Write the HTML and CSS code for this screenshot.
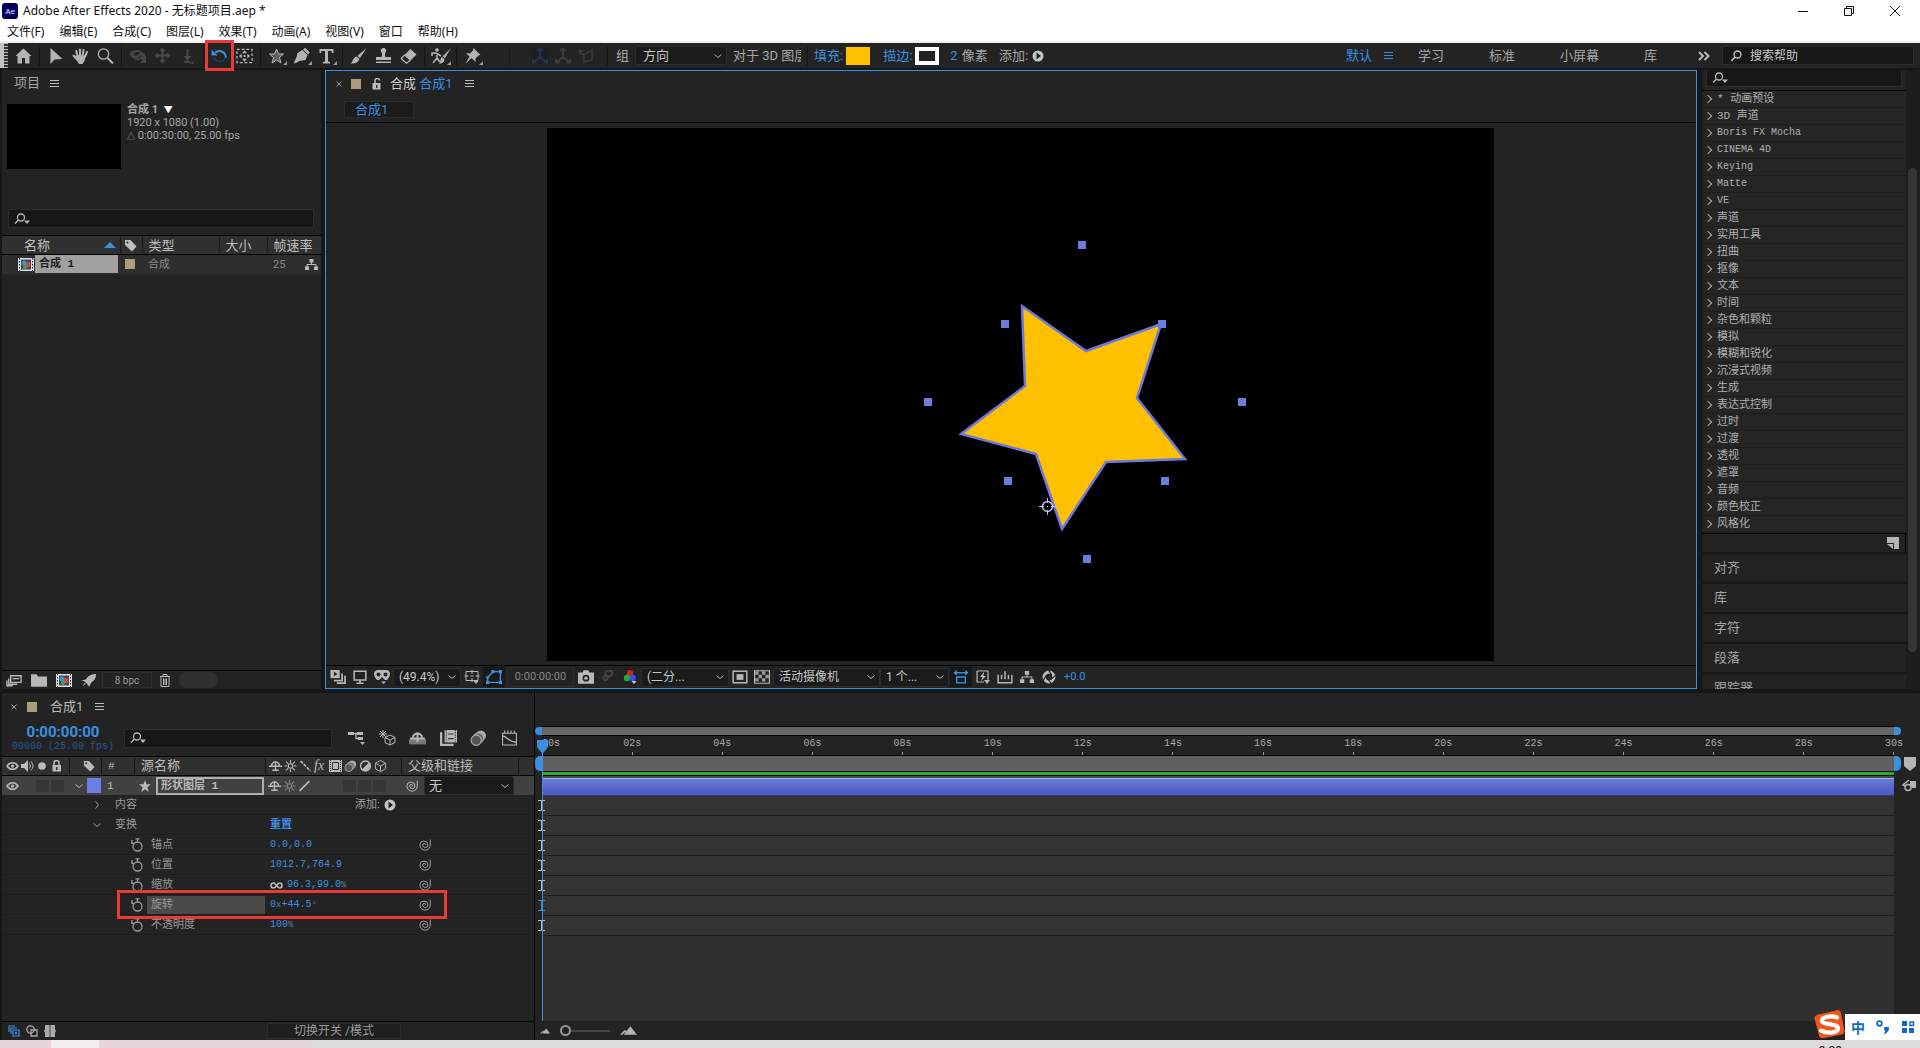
FILE: index.html
```html
<!DOCTYPE html>
<html lang="zh-CN">
<head>
<meta charset="utf-8">
<title>Adobe After Effects 2020 - 无标题项目.aep *</title>
<link rel="stylesheet" href="styles.css">
</head>
<body>
<svg class="defs" aria-hidden="true">
  <symbol id="home" viewBox="0 0 16 16"><path fill="currentColor" d="M8 0.5 0 8h2v7.500h4.500V10h3v5.500H14V8h2z"/></symbol>
  <symbol id="arrow" viewBox="0 0 16 16"><path fill="currentColor" d="M3 0v16l4-4.500L15 11z"/></symbol>
  <symbol id="hand" viewBox="0 0 16 16"><path fill="none" stroke="currentColor" stroke-width="2" stroke-linecap="round" d="M5 8 3.800 3M7.500 8V1.500M10 8l1-6M12.300 9 14.500 4M4 11 1 7.500"/><path fill="currentColor" d="M4 7l9 .5-.8 5L10 16H6.500L2 9z"/></symbol>
  <symbol id="zoom" viewBox="0 0 16 16"><circle cx="6" cy="6" r="5.200" fill="none" stroke="currentColor" stroke-width="1.300"/><path stroke="currentColor" stroke-width="2" d="m10 10 5.500 5.500"/></symbol>
  <symbol id="orbit" viewBox="0 0 20 16"><circle cx="10" cy="7" r="5" fill="none" stroke="currentColor" stroke-width="2"/><path fill="none" stroke="currentColor" stroke-width="2.500" d="M8 3H4L2 6l3 3h5l3-3h4l1 3-3 3M16 15h3v-3z"/></symbol>
  <symbol id="pan" viewBox="0 0 16 16"><path fill="none" stroke="currentColor" stroke-width="2" d="M8 1v13M1.500 7.500h13M6 3l2-2 2 2M6 12l2 2 2-2M3.500 5.500l-2 2 2 2M12.500 5.500l2 2-2 2"/></symbol>
  <symbol id="dolly" viewBox="0 0 16 16"><path fill="none" stroke="currentColor" stroke-width="2" d="M8 1v10M5 14h6"/><path fill="currentColor" d="M4 8h8l-4 5zM14 13v3h-3z"/></symbol>
  <symbol id="rotate" viewBox="0 0 18 18"><path fill="none" stroke="currentColor" stroke-width="2.200" d="M4 5.500C8 2 14 3 16 9v2"/><path fill="currentColor" d="m0 2 7 6.500H0z"/><path fill="none" stroke="#1d4a78" stroke-width="2" stroke-dasharray="2 1.500" d="M3 11c1 3 3 4 6 4s5-1 6-3"/></symbol>
  <symbol id="anchorbox" viewBox="0 0 18 16"><path fill="none" stroke="currentColor" stroke-width="1.300" stroke-dasharray="3 2" d="M1 1h16v14H1z"/><path fill="currentColor" d="m9 2 2.500 3h-5zM9 14l2.500-3h-5zM3 8l3-2.500v5zM15 8l-3-2.500v5zM8 7h2v2H8z"/></symbol>
  <symbol id="star" viewBox="0 0 16 16"><path fill="#5e5e5e" stroke="currentColor" d="m8 1 2 5h5l-4 3.500 1.500 5.500L8 12l-4.500 3L5 9.500 1 6h5z"/></symbol>
  <symbol id="starsolid" viewBox="0 0 16 16"><path fill="currentColor" d="m8 0 2 5.500h6L11.200 9.500 13 16l-5-3.800L3 16l1.800-6.500L0 5.500h6z"/></symbol>
  <symbol id="pen" viewBox="0 0 16 16"><path fill="currentColor" d="m9 2 5 5-2 5-6 1-5.500 3 5-6a1.500 1.500 0 1 1 1 .8L0 15.500 3 9l1-4z"/><path stroke="currentColor" stroke-width="2.500" d="m10.500.500 5 5"/></symbol>
  <symbol id="type" viewBox="0 0 16 16"><path fill="currentColor" d="M1 1h14v4h-1.500L13 3H9.500v10.500l2 .500v1.500h-7V14l2-.5V3H3l-.5 2H1z"/></symbol>
  <symbol id="brush" viewBox="0 0 16 16"><path fill="currentColor" d="M16 0 9.500 10l-2.700-2zM6 8.500l2.800 2.300C8 15 4 16 0 15.500c2.500-1 2-6 6-7z"/></symbol>
  <symbol id="stamp" viewBox="0 0 16 16"><path fill="currentColor" d="M8 0c2.500 0 3.500 2.500 2 4.500-.7 1-.7 3 0 4.500h5.500v3H.5V9H6c.7-1.500.7-3.500 0-4.500C4.500 2.500 5.500 0 8 0zM.5 13.500h15V15H.5z"/></symbol>
  <symbol id="eraser" viewBox="0 0 16 16"><path fill="currentColor" d="m10 1 6 5.500-6 6L4 7z"/><path fill="none" stroke="currentColor" stroke-width="1.200" d="m4 7-3.300 3.500L6 15.300l4-3.300z"/></symbol>
  <symbol id="roto" viewBox="0 0 20 16"><circle cx="6" cy="2" r="1.800" fill="currentColor"/><path fill="none" stroke="currentColor" stroke-width="1.500" d="M1 8V5h4l5 3M6 5v5l-4 5M6 10l3 4"/><path fill="currentColor" d="m20 0-6 10-2.500-1.500zM11 9l2.500 2C13 15 10 16 8 15.500c2-1.500 1-5.500 3-6.500z"/></symbol>
  <symbol id="pin" viewBox="0 0 16 16"><path fill="currentColor" d="m9 0 7 7-2 .5-3 3 .2 3.500L7 10l-6 6 4-7.500L1.500 5l4 .5 3-3z"/></symbol>
  <symbol id="axes" viewBox="0 0 18 16"><path fill="none" stroke="currentColor" stroke-width="2" d="M9 1v8l-6 5M9 9l6 5M6 3l3-2.500L12 3M2 11v3.500h3.500M16 11v3.500h-3.500"/></symbol>
  <symbol id="view3d" viewBox="0 0 18 16"><path fill="none" stroke="currentColor" stroke-width="1.500" d="m3 5 4 2 8-5v10l-8 2V7M3 1v5M1 3h5"/></symbol>
  <symbol id="menu" viewBox="0 0 9 9"><path stroke="currentColor" d="M0 1.500h9M0 4.500h9M0 7.500h9"/></symbol>
  <symbol id="x" viewBox="0 0 6 6"><path stroke="currentColor" d="m.5.5 5 5m0-5-5 5"/></symbol>
  <symbol id="down" viewBox="0 0 8 8"><path fill="none" stroke="currentColor" d="m.5 2.500 3.500 3 3.500-3"/></symbol>
  <symbol id="right" viewBox="0 0 8 8"><path fill="none" stroke="currentColor" d="m2.500.5 3 3.500-3 3.500"/></symbol>
  <symbol id="chevrons" viewBox="0 0 12 10"><path fill="none" stroke="currentColor" stroke-width="2" d="m1 1 4 4-4 4M6.500 1l4 4-4 4"/></symbol>
  <symbol id="search" viewBox="0 0 17 12"><circle cx="7" cy="4.500" r="3.500" fill="none" stroke="currentColor" stroke-width="1.300"/><path stroke="currentColor" stroke-width="1.500" d="M4.500 7 1 10.500"/><path fill="currentColor" d="M10 7.500h6L13 11z"/></symbol>
  <symbol id="find" viewBox="0 0 14 12"><circle cx="8" cy="4.500" r="3.500" fill="none" stroke="currentColor" stroke-width="1.300"/><path stroke="currentColor" stroke-width="1.500" d="M5.500 7 2 11"/></symbol>
  <symbol id="play" viewBox="0 0 12 12"><circle cx="6" cy="6" r="5.500" fill="#c4c4c4"/><path fill="#232323" d="m4.500 2.500 4.500 3.500-4.500 3.500z"/></symbol>
  <symbol id="lock" viewBox="0 0 12 12"><path fill="currentColor" d="M2 5h8.500v6.500H2z"/><path fill="none" stroke="currentColor" stroke-width="1.500" d="M3.500 5V3a2.500 2.500 0 0 1 5 0v2"/><path fill="#333" d="M5.500 7h1.500v3H5.500z"/></symbol>
  <symbol id="unlock" viewBox="0 0 12 12"><path fill="currentColor" d="M1.500 5h8v6.500h-8z"/><path fill="none" stroke="currentColor" stroke-width="1.500" d="M4 5V3a2.200 2.200 0 0 1 4.500-.5"/><path fill="#333" d="M5 7h1.500v3H5z"/></symbol>
  <symbol id="tag" viewBox="0 0 13 13"><path fill="currentColor" d="M1 1h5.500l6 6.500-4.500 5L1 6z"/><circle cx="3.500" cy="3.500" r="1" fill="#222"/></symbol>
  <symbol id="tree" viewBox="0 0 13 13"><path fill="currentColor" d="M4.500 1h4v3.500h-4zM0 8.500h4V12H0zM9 8.500h4V12H9z"/><path fill="none" stroke="currentColor" d="M6.500 4v3M2 9V6.500h9V9"/></symbol>
  <symbol id="comp" viewBox="0 0 16 13"><path fill="#ddd" d="M0 0h16v13H0z"/><path stroke="#222" stroke-dasharray="1.500 1.500" d="M1.500 0v13M14.500 0v13"/><path fill="#446" d="M3 1.500h10v10H3z"/><circle cx="6" cy="5" r="2.500" fill="#2e9cc4"/><path fill="#d24a3c" d="M8 4h4v5H8z"/><circle cx="7" cy="9" r="2" fill="#5a9a50"/></symbol>
  <symbol id="interpret" viewBox="0 0 17 12"><path fill="none" stroke="currentColor" stroke-width="1.500" d="M5 1h11v7H5zM7 4h7M3 4v6h9M1 6v5.500h6"/></symbol>
  <symbol id="folder" viewBox="0 0 14 11"><path fill="currentColor" d="M0 0h5l1 2h8v9H0z"/></symbol>
  <symbol id="rocket" viewBox="0 0 14 12"><path fill="currentColor" d="M13.500 0C9 0 6 2 4 5L0 6l3 1 3 3 1 2 2-4c3-2 4.500-4 4.500-8zM1 11l2-3 1 1z"/></symbol>
  <symbol id="trash" viewBox="0 0 11 13"><path fill="none" stroke="currentColor" d="M.5 2.500h10M3.500 2V.5h4V2M1.500 2.500v10h8v-10M4 4.500V11M5.500 4.500V11M7 4.500V11"/></symbol>
  <symbol id="stack" viewBox="0 0 13 12"><path fill="currentColor" d="M0 0h8v7H0z"/><path fill="#232323" d="m3 1.500 3 2-3 2z"/><path fill="none" stroke="currentColor" stroke-width="1.500" d="M3 9h7V3M5.500 11.300h7V5"/></symbol>
  <symbol id="monitor" viewBox="0 0 12 12"><path fill="none" stroke="currentColor" stroke-width="1.300" d="M1 1h10v7.500H1zM6 8.500V11M3 11.300h6"/></symbol>
  <symbol id="goggles" viewBox="0 0 16 14"><path fill="currentColor" d="M3 0h10q3 1 3 4t-3 6h-2L8 7 5 10H3Q0 7 0 4t3-4zM7 11.500h5L9.500 14z"/><circle cx="4.500" cy="4.500" r="2" fill="#232323"/><circle cx="11.500" cy="4.500" r="2" fill="#232323"/></symbol>
  <symbol id="guides" viewBox="0 0 15 14"><path fill="none" stroke="currentColor" d="M1.500 1.500h12v9h-12zM7.500 0v4M7.500 8v4M0 6h4M11 6h4M6 6h3"/><path fill="currentColor" d="M9 11h5l-2.500 3z"/></symbol>
  <symbol id="mask" viewBox="0 0 15 13"><path fill="none" stroke="currentColor" stroke-width="1.300" d="M1.500 11.500V7l5-5.500h7v10z"/><path fill="currentColor" d="M0 10h3v3H0zM12 10h3v3h-3zM12 0h3v3h-3zM5 0h3v3H5zM0 6h3v2H0z"/></symbol>
  <symbol id="camera" viewBox="0 0 14 12"><path fill="currentColor" d="M0 2h4l1-2h4l1 2h4v10H0z"/><circle cx="7" cy="7" r="3" fill="#232323"/><circle cx="7" cy="7" r="1.500" fill="currentColor"/></symbol>
  <symbol id="persons" viewBox="0 0 14 14"><path fill="none" stroke="currentColor" stroke-width="2" d="M4 6a2 2 0 1 1 1 4 2 2 0 1 1-1-4M9 1a2 2 0 1 1 1 4 3 3 0 1 1-1-4"/></symbol>
  <symbol id="rgb" viewBox="0 0 13 14"><circle cx="6.500" cy="3.500" r="3.200" fill="#e02020"/><circle cx="3.500" cy="8" r="3.200" fill="#20b030"/><circle cx="9" cy="8" r="3.200" fill="#3050f0"/><path fill="#ccc" d="M8 11h5l-2.500 3z"/></symbol>
  <symbol id="roi" viewBox="0 0 14 12"><path fill="none" stroke="currentColor" stroke-width="1.300" d="M1 1h12v10H1z"/><path fill="currentColor" d="M4 3.500h6v5H4z"/></symbol>
  <symbol id="checker" viewBox="0 0 14 12"><path fill="none" stroke="currentColor" d="M.5.500h13v11H.5z"/><path fill="#999" d="M1 1h3v3H1zM7 1h3v3H7zM4 4h3v3H4zM10 4h3v3h-3zM1 7h3v3H1zM7 7h3v3H7z"/></symbol>
  <symbol id="pixel" viewBox="0 0 14 13"><path fill="none" stroke="currentColor" stroke-width="1.300" d="M1 2.500h12M3 6.500h8v5.500H3zM3 .500l-2 2 2 2M11 .500l2 2-2 2"/></symbol>
  <symbol id="fast" viewBox="0 0 14 14"><path fill="none" stroke="currentColor" stroke-width="1.200" d="M1 1h11v9M1 1v11h7"/><path fill="currentColor" d="M8 2 4 7h2.500L5 11l5-5H7.500zM8 10h6l-3 4z"/></symbol>
  <symbol id="graphline" viewBox="0 0 14 12"><path fill="none" stroke="currentColor" stroke-width="1.300" d="M1 4v7h12V4M4 8V4M7 8V1M10 8V4"/></symbol>
  <symbol id="aperture" viewBox="0 0 13 13"><circle cx="6.500" cy="6.500" r="4.500" fill="none" stroke="currentColor" stroke-width="3"/><path stroke="#232323" d="m6 0 3 5M12.500 5 8 9M9 13 5 8M1 10l3-5"/></symbol>
  <symbol id="eye" viewBox="0 0 12 8"><path fill="none" stroke="currentColor" stroke-width="1.500" d="M1 4c2.500-4 7.500-4 10 0-2.500 4-7.500 4-10 0z"/><circle cx="6" cy="4" r="1.500" fill="currentColor"/></symbol>
  <symbol id="speaker" viewBox="0 0 13 12"><path fill="currentColor" d="M0 4h3l4-4v12L3 8H0z"/><path fill="none" stroke="currentColor" d="M8.500 3.500q2 2.500 0 5M10 1.500q4 4.500 0 9"/></symbol>
  <symbol id="dot" viewBox="0 0 8 8"><circle cx="4" cy="4" r="3.800" fill="currentColor"/></symbol>
  <symbol id="shy" viewBox="0 0 14 12"><path fill="none" stroke="currentColor" stroke-width="1.600" d="M3 5.500V4q4-5 8 0v1.500M0 6.300h14M7 2v9M3.500 10.500h7"/></symbol>
  <symbol id="sun" viewBox="0 0 11 11"><circle cx="5.500" cy="5.500" r="2" fill="none" stroke="currentColor"/><path stroke="currentColor" d="M5.500 0v2.500M5.500 8.500V11M0 5.500h2.500M8.500 5.500H11M1.500 1.500l2 2M9.500 1.500l-2 2M1.500 9.500l2-2M9.500 9.500l-2-2"/></symbol>
  <symbol id="quality" viewBox="0 0 11 11"><path stroke="currentColor" stroke-width="1.500" stroke-dasharray="3 1" d="m1 1 9 9"/></symbol>
  <symbol id="slash" viewBox="0 0 11 11"><path stroke="currentColor" stroke-width="1.500" d="m1 10 9-9"/></symbol>
  <symbol id="film" viewBox="0 0 13 12"><path fill="currentColor" d="M0 0h13v12H0z"/><path fill="none" stroke="#333" stroke-dasharray="1 1" d="M1.500 0v12M11.500 0v12"/><path fill="none" stroke="#333" d="M3.500 2.500h6v7h-6z"/></symbol>
  <symbol id="blur" viewBox="0 0 14 14"><circle cx="9" cy="5" r="4.500" fill="#aaa"/><circle cx="7" cy="7" r="4.500" fill="#666" stroke="#aaa"/><circle cx="5" cy="9" r="4.500" fill="#555" stroke="#aaa"/></symbol>
  <symbol id="adjust" viewBox="0 0 12 12"><circle cx="6" cy="6" r="5" fill="none" stroke="currentColor" stroke-width="1.300"/><path fill="currentColor" d="M9.500 2.500a5 5 0 0 1-7 7z"/></symbol>
  <symbol id="cube" viewBox="0 0 12 13"><path fill="none" stroke="currentColor" d="m6 .500 5.500 3v6L6 12.500l-5.500-3v-6zM.5 3.500l5.500 3 5.500-3M6 6.500v6"/></symbol>
  <symbol id="flow" viewBox="0 0 17 14"><path fill="currentColor" d="M0 1h6v3H0zM9 1h6v3H9zM10 6h5v3h-5zM12 11h5l-2.500 3z"/><path fill="none" stroke="currentColor" stroke-width="1.300" d="M6 2.500h4M8 2.500v5h3"/></symbol>
  <symbol id="draft" viewBox="0 0 17 16"><path fill="none" stroke="currentColor" d="m11 5 5 2.500v5L11 15l-5-2.500v-5zM6 7.500l5 2.500 5-2.500M11 10v5M4 0v8M0 4h8M1 1l6 6M7 1 1 7"/></symbol>
  <symbol id="shylay" viewBox="0 0 16 12"><path fill="#777" d="M0 7h16v5H0z"/><path fill="none" stroke="currentColor" stroke-width="1.800" d="M4 6V4q4-5 8 0v2M1 6.500h14M8 2v8"/></symbol>
  <symbol id="frames" viewBox="0 0 15 14"><path fill="currentColor" d="M4 0h11v11H4zM2 2v10h10v2H0V2z"/><path fill="none" stroke="#333" stroke-dasharray="1 1" d="M5.500 0v11M13.500 0v11"/><path fill="none" stroke="#333" d="M7 3.500h5M7 7.500h5"/></symbol>
  <symbol id="graph" viewBox="0 0 16 14"><path fill="none" stroke="currentColor" d="M1.500 2.500h13v11h-13zM3.500 0v2M6.500 0v2M9.500 0v2M12.500 0v2"/><path fill="none" stroke="currentColor" stroke-width="1.300" d="M1 5c5 0 6 6 13 6"/></symbol>
  <symbol id="spiral" viewBox="0 0 12 12"><path fill="none" stroke="currentColor" d="M11.300.5V6A5.200 5.200 0 0 1 .9 6a4 4 0 0 1 8 0 2.600 2.600 0 0 1-5.200 0 1.500 1.500 0 0 1 3 0"/></symbol>
  <symbol id="watch" viewBox="0 0 12 14"><circle cx="6.500" cy="8.500" r="4.500" fill="none" stroke="currentColor" stroke-width="1.300"/><path fill="none" stroke="currentColor" stroke-width="1.300" d="M4.500.8h4M6.500 1v3M0 4l3 2M1 2v4"/></symbol>
  <symbol id="link" viewBox="0 0 13 7"><path fill="none" stroke="currentColor" stroke-width="1.500" d="M5 1H3.500a2.300 2.300 0 0 0 0 5C6 6 7 1 9.500 1a2.300 2.300 0 0 1 0 5C7 6 6 1 3.500 1"/></symbol>
  <symbol id="newitem" viewBox="0 0 12 12"><path fill="currentColor" d="M0 0h12v12H7V6H0z"/><path fill="currentColor" d="M0 7h6v5z"/></symbol>
  <symbol id="marker" viewBox="0 0 12 14"><path fill="currentColor" d="M0 0h12v9l-6 5-6-5z"/></symbol>
  <symbol id="compbtn" viewBox="0 0 14 13"><path fill="none" stroke="currentColor" stroke-width="1.500" d="M7 1 1 6l3 1"/><circle cx="6" cy="8.500" r="3" fill="none" stroke="currentColor" stroke-width="1.500"/><path fill="currentColor" d="M8 2h6v7h-4L8 5z"/></symbol>
  <symbol id="ibeam" viewBox="0 0 7 11"><path fill="none" stroke="currentColor" d="M0 .5h7M0 10.500h7"/><path stroke="currentColor" stroke-width="2" d="M4 0v11"/></symbol>
  <symbol id="layers" viewBox="0 0 12 12"><path fill="none" stroke="currentColor" stroke-width="1.200" d="M1 7V1h6M3 9V3h6M5 5h6v6H5zM8 6.500v3M6.500 8h3"/></symbol>
  <symbol id="modes" viewBox="0 0 12 12"><circle cx="4.500" cy="4.500" r="3.700" fill="none" stroke="currentColor" stroke-width="1.300"/><path fill="none" stroke="currentColor" stroke-width="1.300" d="M5 5h6v6H5z"/></symbol>
  <symbol id="braces" viewBox="0 0 12 12"><path fill="currentColor" d="M1 0h4v12H1V8L0 6l1-2zM7 0h4v4l1 2-1 2v4H7z"/><path fill="#777" d="M5 0h2v12H5z"/></symbol>
  <symbol id="hills" viewBox="0 0 18 9"><path fill="currentColor" d="m0 9 5-5 2 1L2.500 9zM4 9l7-9 7 9z"/></symbol>
</svg>

<header class="window">
  <div class="titlebar">
    <svg class="logo" viewBox="0 0 16 16"><rect width="16" height="16" rx="3" fill="#00005b"/><text x="8" y="11" text-anchor="middle">Ae</text></svg>
    <h1>Adobe After Effects 2020 - 无标题项目.aep *</h1>
    <div class="controls">
      <button aria-label="最小化"><svg viewBox="0 0 10 10"><path d="M0 5.500h10"/></svg></button>
      <button aria-label="还原"><svg viewBox="0 0 10 10"><path d="M.5 2.500h7v7h-7zM2.500 2V.500h7v7H8"/></svg></button>
      <button aria-label="关闭"><svg viewBox="0 0 10 10"><path d="m0 0 10 10M10 0 0 10"/></svg></button>
    </div>
  </div>
  <nav class="menubar">
    <button>文件(F)</button><button>编辑(E)</button><button>合成(C)</button><button>图层(L)</button><button>效果(T)</button><button>动画(A)</button><button>视图(V)</button><button>窗口</button><button>帮助(H)</button>
  </nav>
</header>

<div class="toolbar">
  <i class="grip"></i>
  <div class="tools">
    <button aria-label="主页"><svg><use href="#home"/></svg></button><i class="sep"></i>
    <button aria-label="选取"><svg><use href="#arrow"/></svg></button>
    <button aria-label="手形"><svg><use href="#hand"/></svg></button>
    <button aria-label="缩放"><svg><use href="#zoom"/></svg></button><i class="sep"></i>
    <button class="off" aria-label="摄像机"><svg><use href="#orbit"/></svg></button>
    <button class="off" aria-label="平移"><svg><use href="#pan"/></svg></button>
    <button class="off" aria-label="推拉"><svg><use href="#dolly"/></svg></button><i class="sep"></i>
    <button class="on" aria-label="旋转"><svg><use href="#rotate"/></svg></button>
    <button aria-label="锚点"><svg><use href="#anchorbox"/></svg></button><i class="sep"></i>
    <button class="more" aria-label="星形"><svg><use href="#star"/></svg></button>
    <button class="more" aria-label="钢笔"><svg><use href="#pen"/></svg></button>
    <button class="more" aria-label="文字"><svg><use href="#type"/></svg></button><i class="sep"></i>
    <button aria-label="画笔"><svg><use href="#brush"/></svg></button>
    <button aria-label="图章"><svg><use href="#stamp"/></svg></button>
    <button aria-label="橡皮擦"><svg><use href="#eraser"/></svg></button><i class="sep"></i>
    <button class="more wide" aria-label="Roto"><svg><use href="#roto"/></svg></button><i class="sep"></i>
    <button class="more" aria-label="人偶"><svg><use href="#pin"/></svg></button>
  </div>
  <div class="axis"><svg class="navy"><use href="#axes"/></svg><svg><use href="#axes"/></svg><svg><use href="#view3d"/></svg></div>
  <div class="options">
    <label for="snap">组</label>
    <span class="pick direction"><select id="snap"><option>方向</option></select><svg><use href="#down"/></svg></span>
    <span class="for3d">对于 3D 图层</span><i class="sep"></i>
    <button class="blue">填充:</button><i class="fill"></i>
    <button class="blue">描边:</button><i class="stroke"></i>
    <span class="width"><b>2</b> 像素</span>
    <button class="add">添加: <svg><use href="#play"/></svg></button>
  </div>
  <nav class="spaces">
    <button class="blue">默认 <svg><use href="#menu"/></svg></button><button>学习</button><button>标准</button><button>小屏幕</button><button>库</button>
    <button aria-label="更多"><svg class="chev"><use href="#chevrons"/></svg></button>
  </nav>
  <label class="field help"><svg><use href="#find"/></svg><input aria-label="搜索帮助" value="搜索帮助"></label>
</div>

<main>
  <section class="panel project">
    <h2>项目 <svg><use href="#menu"/></svg></h2>
    <div class="info">
      <div class="thumb"></div>
      <p><b>合成 1 <span>▼</span></b><br>1920 x 1080 (1.00)<br><small>△</small> 0:00:30:00, 25.00 fps</p>
    </div>
    <label class="field"><svg><use href="#search"/></svg><input aria-label="搜索项目"></label>
    <table>
      <colgroup><col class="c-name"><col class="c-tag"><col class="c-type"><col class="c-size"><col class="c-rate"></colgroup>
      <thead><tr><th><span class="sorted">名称 <i></i></span></th><th><svg><use href="#tag"/></svg></th><th>类型</th><th>大小</th><th>帧速率</th></tr></thead>
      <tbody><tr><td><span class="item"><svg><use href="#comp"/></svg><b>合成 1</b></span></td><td><i class="swatch"></i></td><td>合成</td><td></td><td><span class="rate">25 <svg><use href="#tree"/></svg></span></td></tr></tbody>
    </table>
    <footer>
      <button aria-label="解释素材"><svg><use href="#interpret"/></svg></button><button aria-label="新建文件夹"><svg><use href="#folder"/></svg></button><button aria-label="新建合成"><svg><use href="#comp"/></svg></button><button aria-label="项目设置"><svg><use href="#rocket"/></svg></button>
      <button class="bpc">8 bpc</button><button aria-label="删除"><svg><use href="#trash"/></svg></button><i class="pill"></i>
    </footer>
  </section>

  <section class="panel viewer">
    <h2><svg class="close"><use href="#x"/></svg><i class="swatch"></i><svg class="lock"><use href="#unlock"/></svg><span>合成 <a href="#stage">合成1</a></span><svg><use href="#menu"/></svg></h2>
    <div class="crumbs"><button>合成1</button></div>
    <div class="stage" id="stage">
      <svg viewBox="0 0 947 533">
        <rect width="947" height="533"/>
        <path fill="#ffc000" stroke="#6b78dc" stroke-width="2.500" d="m475 178 64 45 75-27-24 74 48 61-79 3-44 67-26-75-75-20 64-48z"/>
        <g fill="#6b7ee0"><path d="M531 113h8v8h-8zM454 192h8v8h-8zM611 192h8v8h-8zM377 270h8v8h-8zM691 270h8v8h-8zM457 349h8v8h-8zM614 349h8v8h-8zM536 427h8v8h-8z"/></g>
        <g fill="none" stroke="#b9c0ee"><circle cx="500.500" cy="378.500" r="5" stroke-width="1.500"/><path d="M492 378.500h5M504 378.500h5M500.500 370v5M500.500 382v5"/><path stroke="#fff" d="M500 378.500h1"/></g>
      </svg>
    </div>
    <footer>
      <button aria-label="预览"><svg><use href="#stack"/></svg></button><button aria-label="显示器"><svg><use href="#monitor"/></svg></button><button aria-label="VR"><svg><use href="#goggles"/></svg></button>
      <span class="pick zoom"><select aria-label="放大率"><option>(49.4%)</option></select><svg><use href="#down"/></svg></span>
      <button aria-label="网格"><svg><use href="#guides"/></svg></button><button class="on" aria-label="蒙版"><svg><use href="#mask"/></svg></button>
      <button class="time">0:00:00:00</button>
      <button aria-label="快照"><svg><use href="#camera"/></svg></button><button class="off" aria-label="显示快照"><svg><use href="#persons"/></svg></button><button aria-label="通道"><svg><use href="#rgb"/></svg></button>
      <span class="pick res"><select aria-label="分辨率"><option>(二分...</option></select><svg><use href="#down"/></svg></span>
      <button aria-label="目标区域"><svg><use href="#roi"/></svg></button><button aria-label="透明网格"><svg><use href="#checker"/></svg></button>
      <span class="pick cam"><select aria-label="视图"><option>活动摄像机</option></select><svg><use href="#down"/></svg></span>
      <span class="pick views"><select aria-label="视图布局"><option>1 个...</option></select><svg><use href="#down"/></svg></span>
      <button class="on" aria-label="像素长宽比"><svg><use href="#pixel"/></svg></button><button aria-label="快速预览"><svg><use href="#fast"/></svg></button><button aria-label="时间轴"><svg><use href="#graphline"/></svg></button><button aria-label="流程图"><svg><use href="#tree"/></svg></button><button aria-label="曝光"><svg><use href="#aperture"/></svg></button><span class="blue">+0.0</span>
    </footer>
  </section>

  <aside>
    <div class="effects">
      <label class="field"><svg><use href="#search"/></svg><input aria-label="搜索效果"></label>
      <ul>
        <li><button>* 动画预设</button></li><li><button>3D 声道</button></li><li><button class="latin">Boris FX Mocha</button></li><li><button class="latin">CINEMA 4D</button></li><li><button class="latin">Keying</button></li><li><button class="latin">Matte</button></li><li><button class="latin">VE</button></li><li><button>声道</button></li><li><button>实用工具</button></li><li><button>扭曲</button></li><li><button>抠像</button></li><li><button>文本</button></li><li><button>时间</button></li><li><button>杂色和颗粒</button></li><li><button>模拟</button></li><li><button>模糊和锐化</button></li><li><button>沉浸式视频</button></li><li><button>生成</button></li><li><button>表达式控制</button></li><li><button>过时</button></li><li><button>过渡</button></li><li><button>透视</button></li><li><button>遮罩</button></li><li><button>音频</button></li><li><button>颜色校正</button></li><li><button>风格化</button></li>
      </ul>
      <footer><button aria-label="新建"><svg><use href="#newitem"/></svg></button></footer>
      <nav><button>对齐</button><button>库</button><button>字符</button><button>段落</button><button>跟踪器</button></nav>
    </div>
    <div class="scroll"><i></i></div>
  </aside>
</main>

<section class="timeline">
  <div class="left">
    <h2><svg class="close"><use href="#x"/></svg><i class="swatch"></i><span>合成1</span><svg><use href="#menu"/></svg></h2>
    <div class="controls">
      <p><b>0:00:00:00</b><small>00000 (25.00 fps)</small></p>
      <label class="field"><svg><use href="#search"/></svg><input aria-label="搜索图层"></label>
      <div class="modes"><svg><use href="#flow"/></svg><svg><use href="#draft"/></svg><svg><use href="#shylay"/></svg><svg><use href="#frames"/></svg><svg><use href="#blur"/></svg><svg><use href="#graph"/></svg></div>
    </div>
    <div class="cols head">
      <span class="av"><svg><use href="#eye"/></svg><svg><use href="#speaker"/></svg><svg class="dot"><use href="#dot"/></svg><svg><use href="#lock"/></svg></span>
      <span class="mid"><svg><use href="#tag"/></svg></span><span class="num">#</span><span class="name">源名称</span>
      <span class="switches"><svg><use href="#shy"/></svg><svg><use href="#sun"/></svg><svg><use href="#quality"/></svg><em>fx</em><svg><use href="#film"/></svg><svg><use href="#blur"/></svg><svg><use href="#adjust"/></svg><svg><use href="#cube"/></svg></span>
      <span class="name">父级和链接</span><span></span>
    </div>
    <div class="cols layer">
      <span class="av"><svg><use href="#eye"/></svg><i class="none"></i><i></i><i></i></span>
      <span class="label"><svg><use href="#down"/></svg><i></i></span><b class="num">1</b>
      <span class="title"><svg><use href="#starsolid"/></svg><b>形状图层 1</b></span>
      <span class="switches"><svg><use href="#shy"/></svg><svg class="dim"><use href="#sun"/></svg><svg><use href="#slash"/></svg><i class="none"></i><i class="none"></i><i></i><i></i><i></i></span>
      <span class="parent"><svg><use href="#spiral"/></svg><span class="pick"><select aria-label="父级"><option>无</option></select><svg><use href="#down"/></svg></span></span><span></span>
    </div>
    <div class="prop group"><svg><use href="#right"/></svg><span>内容</span><button class="add">添加: <svg><use href="#play"/></svg></button></div>
    <div class="prop group"><svg><use href="#down"/></svg><span>变换</span><a href="#stage">重置</a></div>
    <div class="prop"><svg class="watch"><use href="#watch"/></svg><span>锚点</span><output>0.0,0.0</output><svg><use href="#spiral"/></svg></div>
    <div class="prop"><svg class="watch"><use href="#watch"/></svg><span>位置</span><output>1012.7,764.9</output><svg><use href="#spiral"/></svg></div>
    <div class="prop"><svg class="watch"><use href="#watch"/></svg><span>缩放</span><output><svg class="link"><use href="#link"/></svg>96.3,99.0<small>%</small></output><svg><use href="#spiral"/></svg></div>
    <div class="prop picked"><svg class="watch"><use href="#watch"/></svg><span>旋转</span><output>0<small>x</small>+44.5<small>°</small></output><svg><use href="#spiral"/></svg></div>
    <div class="prop"><svg class="watch"><use href="#watch"/></svg><span>不透明度</span><output>100<small>%</small></output><svg><use href="#spiral"/></svg></div>
    <footer><svg class="blue"><use href="#layers"/></svg><svg><use href="#modes"/></svg><svg><use href="#braces"/></svg><button>切换开关 /模式</button></footer>
  </div>

  <div class="right">
    <div class="tracks">
      <div class="navigator"><i></i></div>
      <div class="ruler"><span>00s</span><span>02s</span><span>04s</span><span>06s</span><span>08s</span><span>10s</span><span>12s</span><span>14s</span><span>16s</span><span>18s</span><span>20s</span><span>22s</span><span>24s</span><span>26s</span><span>28s</span><span>30s</span></div>
      <div class="work"><i></i></div>
      <div class="cache"><i></i></div>
      <div class="lane clip"><i></i></div>
      <div class="lane"><svg><use href="#ibeam"/></svg></div><div class="lane"><svg><use href="#ibeam"/></svg></div><div class="lane"><svg><use href="#ibeam"/></svg></div><div class="lane"><svg><use href="#ibeam"/></svg></div><div class="lane"><svg><use href="#ibeam"/></svg></div><div class="lane"><svg class="blue"><use href="#ibeam"/></svg></div><div class="lane"><svg><use href="#ibeam"/></svg></div>
      <div class="rest"></div>
      <svg class="playhead" viewBox="0 0 11 14"><path d="M0 0h11v7l-5.500 7L0 7z"/></svg>
      <i class="needle"></i>
    </div>
    <div class="gutter"><svg><use href="#marker"/></svg><svg><use href="#compbtn"/></svg></div>
    <footer><svg class="small"><use href="#hills"/></svg><input type="range" aria-label="时间缩放" value="0"><svg><use href="#hills"/></svg></footer>
  </div>
</section>

<div class="taskbar"><time>9:28</time></div>

<div class="ime">
  <svg class="sogou" viewBox="0 0 32 32"><path fill="#f0561d" d="M3 5 25 0q2 0 3 2l4 20q0 3-3 4L9 30q-3 0-4-2L0 9q0-3 3-4z"/><path fill="none" stroke="#fff" stroke-width="4.500" stroke-linecap="round" d="M24 8C16 5 7 8 8 12s16 2 17 7-10 7-18 3"/></svg>
  <span>中</span>
  <svg viewBox="0 0 12 12"><circle cx="3" cy="3" r="2" fill="none" stroke="currentColor" stroke-width="1.500"/><path fill="currentColor" d="M7 6h4v3l-3 3H7l1-3H7z"/></svg>
  <svg viewBox="0 0 14 14"><path fill="currentColor" d="M1 1h5v5H1zM1 8h5v5H1zM8 8h5v5H8z"/><path fill="none" stroke="currentColor" stroke-width="1.500" d="M9 2h3.500v3.500H9z"/></svg>
</div>
</body>
</html>
```

FILE: styles.css
```css
:root {
  --panel: #232323;
  --gap: #171717;
  --text: #a6a6a6;
  --light: #c8c8c8;
  --blue: #3b8fe0;
  --red: #e93a38;
  --cjk: "Noto Sans CJK SC", sans-serif;
  --ui: Roboto, "Noto Sans CJK SC", sans-serif;
  --mono: "Liberation Mono", "Noto Sans CJK SC", monospace;
}

* { box-sizing: border-box; }

body {
  margin: 0;
  height: 100vh;
  overflow: hidden;
  display: flex;
  flex-direction: column;
  position: relative;
  background: var(--gap);
  color: var(--text);
  font: 13px/16px var(--ui);
  white-space: nowrap;
}

button, select, input {
  margin: 0;
  padding: 0;
  border: 0;
  background: none;
  color: inherit;
  font: inherit;
}

h1, h2, p, ul { margin: 0; padding: 0; font-weight: 400; }
ul { list-style: none; }
a { color: var(--blue); text-decoration: none; }
svg { display: block; flex: none; width: 12px; height: 12px; }
.defs { position: absolute; width: 0; height: 0; }
.blue { color: var(--blue); }
.swatch { width: 10px; height: 10px; background: #ae9c78; display: block; }
.close { width: 6px; height: 6px; color: #999; }

/* Window frame */
.window { background: #fff; color: #111; font: 12px/20px "Noto Sans", var(--cjk); border-bottom: 2px solid #efefef; }
.titlebar { display: flex; align-items: center; height: 22px; padding-left: 2px; gap: 5px; }
.titlebar h1 { font-size: 12px; line-height: 24px; flex: 1; }
.logo { width: 16px; height: 16px; }
.logo text { fill: #b0a8ff; font: 700 8px var(--ui); }
.window .controls { display: flex; }
.window .controls button { width: 46px; height: 20px; display: grid; place-items: center; }
.window .controls svg { width: 10px; height: 10px; fill: none; stroke: #111; }
.titlebar .controls { margin-right: 2px; }
.menubar { display: flex; height: 19px; gap: 15px; padding-left: 7px; }

/* Toolbar */
.toolbar { display: flex; align-items: center; height: 27px; flex: none; background: var(--panel); border-bottom: 2px solid var(--gap); }
.grip { width: 8px; height: 25px; background: repeating-linear-gradient(#bbb 0 1px, #333 1px 3px); border-left: 4px solid #c4c4c4; }
.tools { display: flex; align-items: center; padding-left: 3px; color: #b4b4b4; width: 502px; border-right: 1px solid #1a1a1a; height: 20px; }
.tools button { width: 25px; height: 25px; display: grid; place-items: center; position: relative; flex: none; }
.tools svg { width: 17px; height: 16px; }
.tools .wide svg { width: 20px; }
.tools .off { color: #484848; }
.tools .on { color: var(--blue); }
.tools .on::before { content: ""; position: absolute; inset: -3px -2px; border: 3px solid var(--red); z-index: 2; }
.tools .more::after { content: ""; position: absolute; right: 2px; bottom: 3px; border: 2px solid #999; border-left-color: transparent; border-top-color: transparent; }
.sep { width: 1px; height: 20px; margin: 0 3px; background: #151515; flex: none; }
.axis { display: flex; gap: 5px; width: 98px; padding-left: 21px; height: 20px; align-items: center; border-right: 1px solid #151515; color: #3c3c3c; }
.axis svg { width: 18px; height: 16px; }
.axis .navy { color: #22334e; background: #1c1e24; }
.options { display: flex; align-items: center; padding-left: 8px; gap: 3px; }
.pick { display: inline-grid; align-items: center; }
.pick > * { grid-area: 1 / 1; }
.pick select { appearance: none; width: 100%; height: 19px; padding-left: 7px; background: #1b1b1b; color: var(--light); border: 1px solid #2c2c2c; border-radius: 2px; }
.pick svg { width: 8px; height: 8px; justify-self: end; margin-right: 5px; pointer-events: none; }
.direction { width: 92px; margin: 0 3px; }
.for3d { width: 68px; overflow: hidden; }
.fill, .stroke { width: 24px; height: 18px; background: #ffc000; }
.stroke { border: 4px solid #fff; background: #232323; }
.fill { margin-right: 10px; }
.width { margin: 0 8px; }
.width b { color: var(--blue); font-weight: 400; margin-right: 1px; }
.add { display: flex; align-items: center; gap: 4px; }
.spaces { margin-left: auto; display: flex; align-items: center; gap: 45px; margin-right: 12px; }
.spaces button { display: flex; align-items: center; gap: 12px; }
.spaces .blue { margin-right: -20px; }
.spaces svg { width: 9px; height: 9px; }
.spaces .chev { width: 12px; height: 10px; margin-left: -4px; color: #bbb; }
.field { display: flex; align-items: center; gap: 8px; height: 19px; background: #171717; border: 1px solid #2c2c2c; padding-left: 5px; color: #b8b8b8; }
.field svg { width: 17px; height: 12px; }
.field input { flex: 1; min-width: 0; }
.help { width: 192px; margin-right: 6px; gap: 5px; color: var(--light); font-size: 12px; }

/* Upper workspace */
main { flex: 619 1 0; min-height: 0; display: grid; grid-template-columns: 319px minmax(0, 1fr) 219px; gap: 4px; padding-left: 2px; }
.panel { background: var(--panel); display: flex; flex-direction: column; min-height: 0; }
h2 { display: flex; align-items: center; font-size: 13px; height: 26px; }
h2 svg { width: 9px; height: 9px; color: #bbb; }

.project h2 { padding-left: 12px; gap: 10px; }
.info { display: flex; gap: 6px; padding: 7px 5px; height: 113px; font-size: 11px; line-height: 13px; }
.thumb { width: 114px; height: 65px; margin-top: 1px; background: #000; }
.info b span { color: #fff; font-size: 9px; line-height: 1px; padding-left: 3px; }
.info small { font-size: 8px; line-height: 1px; }
.project .field { margin: 0 7px 7px 6px; }
table { width: 100%; table-layout: fixed; border-collapse: collapse; }
.c-name { width: 118px; }
.c-tag { width: 22px; }
.c-type { width: 77px; }
.c-size { width: 48px; }
th, td { padding: 0 0 0 6px; text-align: left; font-weight: 400; height: 19px; }
th { background: #303030; color: #bebebe; border: solid #000; border-width: 1px 0; line-height: 17px; }
th + th { border-left: 1px solid #1a1a1a; }
th:first-child { padding-left: 22px; }
.sorted { display: flex; align-items: center; justify-content: space-between; padding-right: 4px; }
.sorted i { border: 6px solid transparent; border-bottom-color: var(--blue); border-top: 0; }
th svg { width: 13px; height: 13px; margin-left: -3px; }
td { background: #2e2e2e; color: #888; font-size: 11px; line-height: 17px; }
td:first-child { padding: 0 2px 0 16px; }
td .swatch { margin-left: -1px; }
.item { display: flex; align-items: center; gap: 1px; }
.item svg { width: 16px; height: 13px; }
.item b { flex: 1; background: #a0a0a0; color: #222; padding-left: 4px; line-height: 18px; font-family: var(--mono); }
.rate { display: flex; justify-content: space-between; align-items: center; }
.rate svg { color: #bbb; width: 13px; height: 13px; margin-right: 3px; }
.project footer { margin-top: auto; height: 19px; border-top: 1px solid #000; display: flex; align-items: center; color: #b8b8b8; gap: 1px; }
.project footer button { width: 24px; height: 16px; display: grid; place-items: center; }
.project footer svg { width: 16px; height: 13px; }
.project footer .bpc { width: 50px; margin: 0; border: 1px solid #2e2e2e; font-size: 10px; color: #999; }
.pill { width: 39px; height: 16px; border-radius: 8px; background: #303030; margin-left: 1px; }

.viewer { border: 1px solid var(--blue); }
.viewer h2 { padding-left: 10px; height: 25px; color: #d0d0d0; }
.viewer h2 .swatch { margin: 0 10px 0 9px; }
.viewer h2 .lock { width: 12px; height: 12px; margin-right: 7px; }
.viewer h2 span { margin-right: 12px; }
.crumbs { height: 27px; padding: 5px 18px 0; border-bottom: 1px solid #000; }
.crumbs button { display: block; width: 70px; height: 17px; padding-left: 10px; text-align: left; background: #1b1b1b; border: 1px solid #2c2c2c; color: var(--blue); line-height: 13px; }
.stage { flex: 1; min-height: 0; padding: 5px 0 4px 18px; display: flex; justify-content: center; }
.stage svg { width: auto; height: 100%; }
.viewer footer { height: 23px; border-top: 1px solid #000; display: flex; align-items: center; padding-left: 1px; color: #b8b8b8; font-size: 12px; }
.viewer footer button { width: 22px; height: 20px; display: grid; place-items: center; flex: none; }
.viewer footer button svg { width: 16px; height: 14px; }
.viewer footer .on { color: var(--blue); background: #181818; }
.viewer footer .off { color: #444; }
.viewer footer .time { width: 67px; margin: 0 1px 0 2px; border: 1px solid #2c2c2c; font-size: 11px; color: #888; }
.viewer footer select { padding-left: 5px; }
.zoom { width: 68px; }
.res { width: 88px; }
.cam { width: 107px; }
.views { width: 69px; margin-right: 1px; }
.viewer .blue { margin-left: 4px; font-size: 11px; }

aside { display: flex; min-height: 0; background: var(--panel); }
.effects { flex: 1; display: flex; flex-direction: column; min-height: 0; overflow: hidden; border-left: 2px solid #1a1a1a; }
.effects .field { margin: 0 4px 3px 3px; height: 17px; border-top: 0; flex: none; }
.effects ul { border: solid #000; border-width: 1px 0; }
.effects li { height: 17px; border-bottom: 1px solid #1d1d1d; background: #252525; }
.effects li button { display: flex; align-items: center; font: 11px/16px var(--mono); color: #b0b0b0; padding-left: 2px; }
.effects li .latin { font-size: 10px; }
.effects li button::before { content: ""; width: 5px; height: 5px; margin-right: 6px; border: solid #aaa; border-width: 1px 1px 0 0; transform: rotate(45deg); }
.effects footer { height: 18px; flex: none; display: flex; justify-content: end; padding: 2px 6px; border-right: 1px solid #000; color: #b4b4b4; }
.effects nav button { display: block; width: 100%; height: 30px; text-align: left; padding-left: 11px; border-top: 2px solid #171717; }
.scroll { width: 14px; background: #1d1d1d; padding: 98px 3px 37px 2px; display: flex; }
.scroll i { flex: 1; background: #353535; border-radius: 5px; }

/* Timeline */
.timeline { flex: 347 1 0; min-height: 0; margin-top: 4px; display: grid; grid-template-columns: 535px minmax(0, 1fr); background: var(--panel); }
.left { display: flex; flex-direction: column; border-left: 2px solid var(--gap); border-right: 1px solid #000; min-width: 0; }
.left h2 { height: 27px; padding-left: 9px; color: #bebebe; flex: none; }
.left h2 .swatch { margin: 0 13px 0 10px; }
.left h2 span { margin-right: 12px; }
.left .controls { display: flex; height: 36px; align-items: center; flex: none; }
.left .controls p { width: 122px; padding-top: 2px; text-align: center; color: var(--blue); }
.left .controls b { display: block; font-size: 15px; line-height: 16px; }
.left .controls small { display: block; color: #24588c; font: 10px/14px var(--mono); }
.left .field { width: 208px; }
.modes { display: flex; align-items: center; flex: 1; justify-content: space-between; padding: 0 16px; }
.modes svg { width: 17px; height: 16px; color: #b8b8b8; }
.cols { display: grid; grid-template-columns: 67px 32px 33px 131px 136px 117px 1fr; flex: none; align-items: center; }
.head { height: 20px; background: #303030; border: solid #000; border-width: 1px 0; color: #bbb; }
.head > * + * { border-left: 1px solid #161616; height: 16px; }
.cols .av { display: flex; align-items: center; gap: 2px; padding-left: 4px; }
.av > *, .switches > * { width: 13px; height: 12px; flex: none; }
.av .dot { width: 12px; height: 8px; }
.mid { display: grid; place-items: center; padding-left: 6px; }
.num { padding-left: 6px; font: 11px/16px var(--mono); }
.cols .name { padding-left: 6px; }
.switches { display: flex; align-items: center; gap: 2px; padding-left: 3px; }
.switches em { font: italic 14px/12px "Liberation Serif", serif; }
.layer { height: 19px; background: #414141; color: #b8b8b8; }
.layer i { background: #363636; }
.layer i.none { background: none; }
.label { display: flex; align-items: center; gap: 4px; padding-left: 6px; }
.label svg { width: 8px; height: 8px; }
.layer .label i { width: 15px; height: 15px; background: #6b7ee6; }
.title { display: flex; align-items: center; gap: 5px; padding-left: 5px; }
.title b { flex: 1; border: 2px solid #b0b0b0; height: 18px; font: 700 11px/14px var(--mono); padding-left: 3px; margin-right: 1px; }
.dim { color: #888; }
.parent { display: flex; align-items: center; gap: 6px; padding-left: 5px; }
.parent .pick { width: 90px; }
.parent select { padding-left: 4px; }
.prop { display: grid; grid-template-columns: 16px 118px 154px 1fr; align-items: center; height: 20px; flex: none; padding: 1px 0 0 129px; border-bottom: 1px solid #1d1d1d; position: relative; font-size: 11px; line-height: 18px; color: #999; }
.prop .watch { width: 12px; height: 14px; }
.prop > span { padding-left: 4px; }
.prop.group { grid-template-columns: 99px 164px 1fr; padding-left: 0; }
.prop.group > svg { width: 8px; height: 8px; justify-self: end; }
.prop.group > span { padding-left: 14px; }
.prop.group > a { font-weight: 700; padding-left: 5px; }
.prop .add { padding-left: 90px; color: #a0a0a0; }
.prop output { font: 10px/18px var(--mono); color: var(--blue); padding-left: 5px; display: flex; align-items: center; }
.prop output small { font-size: 9px; color: #5c7ea0; }
.prop .link { width: 13px; height: 7px; margin-right: 4px; color: #bbb; }
.picked > span { background: #4a4a4a; }
.picked::after { content: ""; position: absolute; inset: -5px 87px -5px 115px; border: 3px solid var(--red); z-index: 1; }
.left footer { margin-top: auto; height: 19px; border-top: 1px solid #000; display: flex; align-items: center; gap: 6px; padding-left: 6px; color: #aaa; }
.left footer button { width: 134px; height: 16px; margin-left: 205px; background: #1e1e1e; border: 1px solid #2c2c2c; font-size: 12px; line-height: 14px; color: #999; }

.right { display: grid; grid-template-columns: minmax(0, 1fr) 26px; grid-template-rows: minmax(0, 1fr) 19px; }
.tracks { position: relative; padding: 33px 0 0 7px; display: flex; flex-direction: column; }
.navigator { height: 10px; border: 1px solid #000; border-width: 1px 0; position: relative; flex: none; background: #666; }
.navigator::before, .navigator::after, .work::before, .work::after { content: ""; position: absolute; top: 0; bottom: 0; right: 100%; width: 7px; background: var(--blue); border-radius: 5px 0 0 5px; }
.navigator::after, .work::after { left: 100%; right: auto; border-radius: 0 5px 5px 0; }
.ruler { height: 19px; flex: none; display: flex; justify-content: space-between; font: 10px/16px var(--mono); }
.ruler span { width: 0; display: flex; flex-direction: column; align-items: center; }
.ruler span::after { content: ""; width: 1px; height: 3px; background: #999; flex: none; }
.ruler span:first-child { align-items: start; }
.work { height: 17px; flex: none; border: 1px solid #000; border-width: 1px 0; background: #606060; position: relative; }
.cache { height: 4px; flex: none; background: #22b02e; border-bottom: 1px solid #000; }
.lane { height: 20px; flex: none; background: #333; border-bottom: 1px solid #1e1e1e; display: flex; align-items: center; }
.lane svg { width: 7px; height: 11px; margin-left: -4px; color: #bbb; }
.lane .blue { color: var(--blue); }
.lane.clip { border-bottom-color: #3b3b60; padding-top: 2px; background: #4a4a4a; }
.clip i { flex: 1; height: 17px; background: linear-gradient(#6a7bd4, #4a58c6); border-top: 1px solid #a9b2e6; }
.rest { flex: 1; background: #303030; }
.playhead { position: absolute; left: 2px; top: 47px; width: 11px; height: 14px; fill: var(--blue); }
.needle { position: absolute; left: 7px; top: 47px; bottom: 0; width: 1px; background: var(--blue); }
.gutter { padding: 64px 4px 0 0; display: flex; flex-direction: column; align-items: end; gap: 8px; color: #b4b4b4; }
.gutter svg { height: 14px; }
.gutter svg + svg { width: 14px; height: 13px; }
.right footer { grid-column: 1 / -1; display: flex; align-items: center; gap: 10px; padding-left: 5px; color: #b4b4b4; }
.right footer svg { width: 17px; height: 9px; }
.right footer .small { width: 10px; height: 6px; }
.right input { appearance: none; width: 50px; height: 12px; background: linear-gradient(#444, #444) center / 100% 2px no-repeat; }
.right input::-webkit-slider-thumb { appearance: none; width: 11px; height: 11px; border: 2px solid #999; border-radius: 50%; background: var(--panel); }

/* Desktop */
.taskbar { height: 8px; flex: none; overflow: hidden; background: linear-gradient(90deg, #e6d5da 51px, #f3edef 51px 99px, #e6d5da 99px 300px, #dcdcdc 316px); text-align: right; color: #111; font-size: 12px; line-height: 12px; padding: 5px 78px 0 0; }
.ime { position: absolute; right: 0; bottom: 8px; width: 75px; height: 26px; background: #fff; color: #1069c4; display: flex; align-items: center; gap: 11px; padding-left: 6px; }
.ime span { font: 700 14px/26px var(--cjk); }
.ime svg { width: 14px; height: 14px; }
.ime .sogou { position: absolute; right: 75px; bottom: 0; width: 31px; height: 30px; }
```
